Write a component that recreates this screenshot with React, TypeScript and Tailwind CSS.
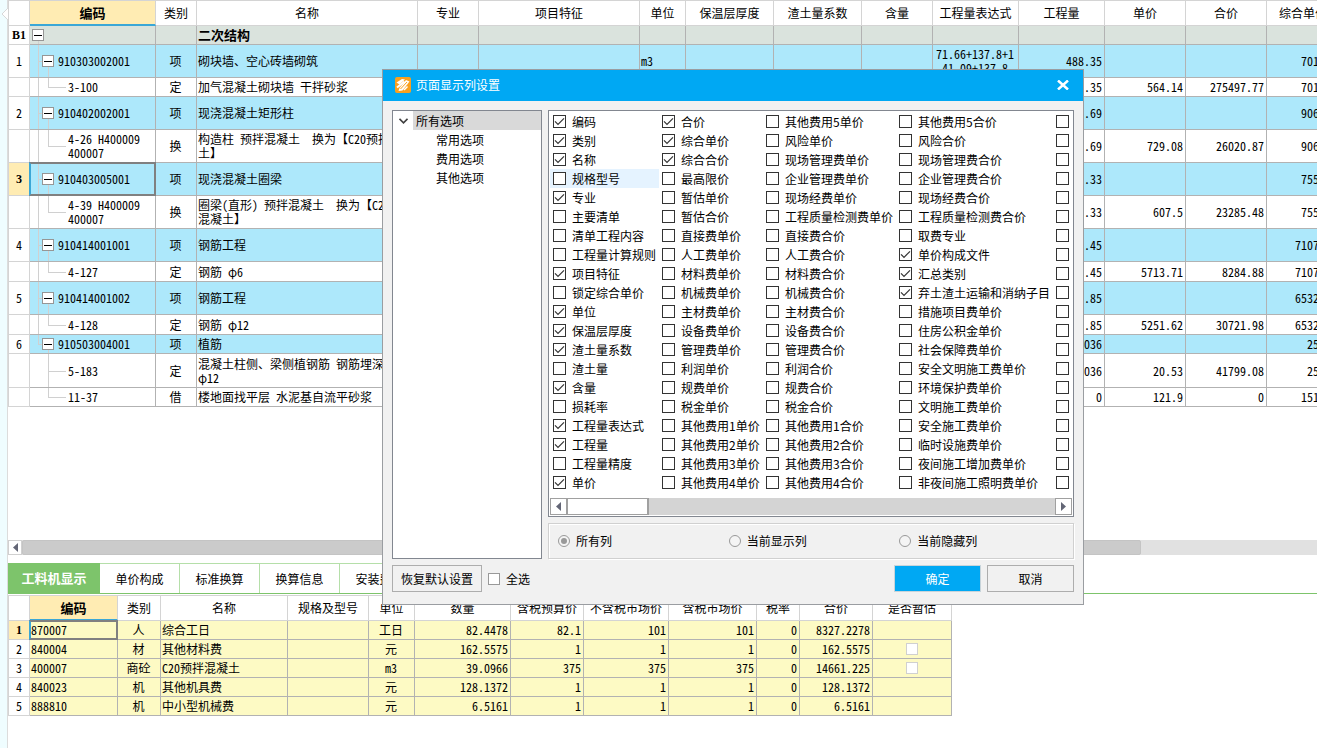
import { useState } from "react";
import type { ReactNode } from "react";
import clsx from "clsx";

type RowKind = "section" | "item" | "sub";

interface BillRow {
  no?: string;
  kind: RowKind;
  height: string;
  code?: string;
  type?: string;
  name: string;
  unit?: string;
  expr?: string;
  qty?: string;
  price?: string;
  total?: string;
  composite?: string;
  // last branch of the outer / inner tree line
  outerEnd?: boolean;
  noOuter?: boolean;
  innerEnd?: boolean;
}

const billColumns = [
  { title: "", width: "w-[22px]" },
  { title: "编码", width: "w-[126px]" },
  { title: "类别", width: "w-[41px]" },
  { title: "名称", width: "w-[221px]" },
  { title: "专业", width: "w-[61px]" },
  { title: "项目特征", width: "w-[161px]" },
  { title: "单位", width: "w-[46px]" },
  { title: "保温层厚度", width: "w-[88px]" },
  { title: "渣土量系数", width: "w-[88px]" },
  { title: "含量", width: "w-[71px]" },
  { title: "工程量表达式", width: "w-[86px]" },
  { title: "工程量", width: "w-[86px]" },
  { title: "单价", width: "w-[81px]" },
  { title: "合价", width: "w-[81px]" },
  { title: "综合单价", width: "w-[73px]" },
];

const billRows: BillRow[] = [
  { no: "B1", kind: "section", height: "h-[19px]", name: "二次结构" },
  { no: "1", kind: "item", height: "h-[33px]", code: "910303002001", type: "项", name: "砌块墙、空心砖墙砌筑", unit: "m3", expr: "71.66+137.8+1\n41.09+137.8", qty: "488.35", composite: "701.62" },
  { kind: "sub", height: "h-[19px]", code: "3-100", type: "定", name: "加气混凝土砌块墙 干拌砂浆", qty: "488.35", price: "564.14", total: "275497.77", composite: "701.62", innerEnd: true },
  { no: "2", kind: "item", height: "h-[33px]", code: "910402002001", type: "项", name: "现浇混凝土矩形柱", qty: "35.69", composite: "906.75" },
  { kind: "sub", height: "h-[33px]", code: "4-26 H400009\n400007", type: "换", name: "构造柱 预拌混凝土　换为【C20预拌混凝\n土】", qty: "35.69", price: "729.08", total: "26020.87", composite: "906.75", innerEnd: true },
  { no: "3", kind: "item", height: "h-[33px]", code: "910403005001", type: "项", name: "现浇混凝土圈梁", qty: "38.33", composite: "755.54" },
  { kind: "sub", height: "h-[33px]", code: "4-39 H400009\n400007", type: "换", name: "圈梁(直形) 预拌混凝土　换为【C20预拌\n混凝土】", qty: "38.33", price: "607.5", total: "23285.48", composite: "755.54", innerEnd: true },
  { no: "4", kind: "item", height: "h-[33px]", code: "910414001001", type: "项", name: "钢筋工程", qty: "1.45", composite: "7107.11" },
  { kind: "sub", height: "h-[20px]", code: "4-127", type: "定", name: "钢筋 φ6", qty: "1.45", price: "5713.71", total: "8284.88", composite: "7107.11", innerEnd: true },
  { no: "5", kind: "item", height: "h-[33px]", code: "910414001002", type: "项", name: "钢筋工程", qty: "5.85", composite: "6532.23" },
  { kind: "sub", height: "h-[20px]", code: "4-128", type: "定", name: "钢筋 φ12", qty: "5.85", price: "5251.62", total: "30721.98", composite: "6532.23", innerEnd: true },
  { no: "6", kind: "item", height: "h-[19px]", code: "910503004001", type: "项", name: "植筋", qty: "2036", composite: "25.53", outerEnd: true },
  { kind: "sub", height: "h-[34px]", code: "5-183", type: "定", name: "混凝土柱侧、梁侧植钢筋 钢筋埋深\nφ12", qty: "2036", price: "20.53", total: "41799.08", composite: "25.53", noOuter: true },
  { kind: "sub", height: "h-[19px]", code: "11-37", type: "借", name: "楼地面找平层 水泥基自流平砂浆", qty: "0", price: "121.9", total: "0", composite: "151.61", noOuter: true, innerEnd: true },
];

const resourceColumns = [
  { title: "", width: "w-[22px]" },
  { title: "编码", width: "w-[88px]" },
  { title: "类别", width: "w-[43px]" },
  { title: "名称", width: "w-[127px]" },
  { title: "规格及型号", width: "w-[81px]" },
  { title: "单位", width: "w-[46px]" },
  { title: "数量", width: "w-[96px]" },
  { title: "含税预算价", width: "w-[73px]" },
  { title: "不含税市场价", width: "w-[85px]" },
  { title: "含税市场价", width: "w-[88px]" },
  { title: "税率", width: "w-[43px]" },
  { title: "合价", width: "w-[73px]" },
  { title: "是否暂估", width: "w-[79px]" },
];

const resourceRows = [
  { code: "870007", type: "人", name: "综合工日", unit: "工日", qty: "82.4478", budget: "82.1", net: "101", gross: "101", total: "8327.2278", estimate: false },
  { code: "840004", type: "材", name: "其他材料费", unit: "元", qty: "162.5575", budget: "1", net: "1", gross: "1", total: "162.5575", estimate: true },
  { code: "400007", type: "商砼", name: "C20预拌混凝土", unit: "m3", qty: "39.0966", budget: "375", net: "375", gross: "375", total: "14661.225", estimate: true },
  { code: "840023", type: "机", name: "其他机具费", unit: "元", qty: "128.1372", budget: "1", net: "1", gross: "1", total: "128.1372", estimate: false },
  { code: "888810", type: "机", name: "中小型机械费", unit: "元", qty: "6.5161", budget: "1", net: "1", gross: "1", total: "6.5161", estimate: false },
];

const tabs = ["工料机显示", "单价构成", "标准换算", "换算信息", "安装费用"];

const optionColumns = [
  ["编码", "类别", "名称", "规格型号", "专业", "主要清单", "清单工程内容", "工程量计算规则", "项目特征", "锁定综合单价", "单位", "保温层厚度", "渣土量系数", "渣土量", "含量", "损耗率", "工程量表达式", "工程量", "工程量精度", "单价"],
  ["合价", "综合单价", "综合合价", "最高限价", "暂估单价", "暂估合价", "直接费单价", "人工费单价", "材料费单价", "机械费单价", "主材费单价", "设备费单价", "管理费单价", "利润单价", "规费单价", "税金单价", "其他费用1单价", "其他费用2单价", "其他费用3单价", "其他费用4单价"],
  ["其他费用5单价", "风险单价", "现场管理费单价", "企业管理费单价", "现场经费单价", "工程质量检测费单价", "直接费合价", "人工费合价", "材料费合价", "机械费合价", "主材费合价", "设备费合价", "管理费合价", "利润合价", "规费合价", "税金合价", "其他费用1合价", "其他费用2合价", "其他费用3合价", "其他费用4合价"],
  ["其他费用5合价", "风险合价", "现场管理费合价", "企业管理费合价", "现场经费合价", "工程质量检测费合价", "取费专业", "单价构成文件", "汇总类别", "弃土渣土运输和消纳子目", "措施项目费单价", "住房公积金单价", "社会保障费单价", "安全文明施工费单价", "环境保护费单价", "文明施工费单价", "安全施工费单价", "临时设施费单价", "夜间施工增加费单价", "非夜间施工照明费单价"],
];

const initialChecked = [
  "编码", "类别", "名称", "专业", "项目特征", "单位", "保温层厚度", "渣土量系数", "含量", "工程量表达式", "工程量", "单价",
  "合价", "综合单价", "综合合价", "单价构成文件", "汇总类别", "弃土渣土运输和消纳子目",
];

function HeaderRow({ columns }: { columns: { title: string; width: string }[] }) {
  return (
    <thead>
      <tr className="h-[26px]">
        {columns.map((c, i) => (
          <th
            key={i}
            scope="col"
            className={clsx(
              "border-t border-r border-[#d4d4d4] p-0 whitespace-nowrap",
              c.width,
              i === 0 && "border-l",
              i === 1 ? "border-b-2 border-b-[#3ba7d6] bg-[#ffecb3] text-[13px] font-bold" : "border-b font-normal"
            )}
          >
            {c.title}
          </th>
        ))}
      </tr>
    </thead>
  );
}

function RowNumber({ active, bold, children }: { active?: boolean; bold?: boolean; children?: ReactNode }) {
  return (
    <td
      className={clsx(
        "border-x border-b border-[#d4d4d4] p-0 text-center",
        active ? "bg-[#ffecb3]" : "bg-white",
        (active || bold) && "font-['Liberation_Serif',serif] font-bold"
      )}
    >
      {children}
    </td>
  );
}

function Cell({ align = "left", children, className }: { align?: "left" | "center" | "right"; children?: ReactNode; className?: string }) {
  return (
    <td
      className={clsx(
        "overflow-hidden border-r border-b border-[#b2b2b2] py-0 pr-[2px] pl-px whitespace-pre",
        align === "center" && "text-center",
        align === "right" && "text-right",
        className
      )}
    >
      {children}
    </td>
  );
}

function SelectionFrame() {
  return <span className="pointer-events-none absolute -inset-px border-2 border-[#808080] border-l-[#3ba7d6]" />;
}

function Expander() {
  return (
    <button type="button" aria-label="折叠" className="relative grid size-3 shrink-0 place-items-center border border-[#969696] bg-white">
      <span className="h-px w-2 bg-black" />
    </button>
  );
}

function CodeCell({ row, selected }: { row: BillRow; selected: boolean }) {
  const line = "absolute border-[#d0d0d0]";
  if (row.kind === "section") {
    return (
      <td className="relative border-r border-b border-[#b2b2b2] py-0 pr-0 pl-[2px]">
        <span className={clsx(line, "top-1/2 bottom-0 left-2 border-l")} />
        <Expander />
      </td>
    );
  }
  return (
    <td className={clsx("relative border-r border-b border-[#b2b2b2] py-0 pr-0", row.kind === "item" ? "pl-3" : "pl-[38px]")}>
      {!row.noOuter && <span className={clsx(line, "top-0 left-2 border-l", row.outerEnd ? "bottom-1/2" : "bottom-0")} />}
      {row.kind === "item" ? (
        <>
          <span className={clsx(line, "top-1/2 left-2 w-1 border-t")} />
          <span className={clsx(line, "top-1/2 bottom-0 left-[18px] border-l")} />
          <div className="flex items-center gap-1">
            <Expander />
            {row.code}
          </div>
        </>
      ) : (
        <>
          <span className={clsx(line, "top-0 left-[18px] border-l", row.innerEnd ? "bottom-1/2" : "bottom-0")} />
          <span className={clsx(line, "top-1/2 left-[18px] w-[18px] border-t")} />
          <div className="whitespace-pre">{row.code}</div>
        </>
      )}
      {selected && <SelectionFrame />}
    </td>
  );
}

function BillTable() {
  return (
    <table className="w-[1332px] table-fixed border-separate border-spacing-0">
      <HeaderRow columns={billColumns} />
      <tbody>
        {billRows.map((row, i) => (
          <tr
            key={i}
            className={clsx(
              row.height,
              row.kind === "section" && "bg-[#dae3dd] font-bold",
              row.kind === "item" && "bg-[#ade8fb]",
              row.kind === "sub" && "bg-white"
            )}
          >
            <RowNumber active={row.no === "3"} bold={row.kind === "section"}>
              {row.no}
            </RowNumber>
            <CodeCell row={row} selected={row.no === "3"} />
            <Cell align="center">{row.type}</Cell>
            <Cell className={clsx(row.kind === "section" && "text-[13px]")}>{row.name}</Cell>
            <Cell />
            <Cell />
            <Cell>{row.unit}</Cell>
            <Cell />
            <Cell />
            <Cell />
            <Cell align="center">{row.expr}</Cell>
            <Cell align="right">{row.qty}</Cell>
            <Cell align="right">{row.price}</Cell>
            <Cell align="right">{row.total}</Cell>
            <Cell align="right">{row.composite}</Cell>
          </tr>
        ))}
      </tbody>
    </table>
  );
}

function ResourceTable() {
  return (
    <table className="w-[944px] table-fixed border-separate border-spacing-0">
      <HeaderRow columns={resourceColumns} />
      <tbody>
        {resourceRows.map((row, i) => (
          <tr key={row.code} className="h-[19px] bg-[#fdfac4]">
            <RowNumber active={i === 0}>{i + 1}</RowNumber>
            <td className="relative border-r border-b border-[#b2b2b2] px-px py-0">
              {row.code}
              {i === 0 && <SelectionFrame />}
            </td>
            <Cell align="center">{row.type}</Cell>
            <Cell>{row.name}</Cell>
            <Cell />
            <Cell align="center">{row.unit}</Cell>
            <Cell align="right">{row.qty}</Cell>
            <Cell align="right">{row.budget}</Cell>
            <Cell align="right">{row.net}</Cell>
            <Cell align="right">{row.gross}</Cell>
            <Cell align="right">0</Cell>
            <Cell align="right">{row.total}</Cell>
            <Cell align="center">
              {row.estimate && (
                <input type="checkbox" aria-label="是否暂估" className="mx-auto block size-3 appearance-none border border-[#d0d0d0] bg-white" />
              )}
            </Cell>
          </tr>
        ))}
      </tbody>
    </table>
  );
}

function Arrow({ dir }: { dir: "left" | "right" }) {
  return (
    <svg width="5" height="9" viewBox="0 0 5 9" fill="#636676" aria-hidden="true">
      {dir === "left" ? <path d="M5 0v9L0 4.5z" /> : <path d="M0 0v9l5-4.5z" />}
    </svg>
  );
}

function Option({ label, checked, hidden, onChange }: { label: string; checked: boolean; hidden?: boolean; onChange: () => void }) {
  return (
    <label className={clsx("flex items-center gap-[6px] overflow-hidden pl-[3px] whitespace-nowrap", label === "规格型号" && "bg-[#e5f3ff]")}>
      <span className="grid shrink-0 place-items-center">
        <input
          type="checkbox"
          checked={checked}
          onChange={onChange}
          aria-label={label}
          className="col-start-1 row-start-1 size-[13px] appearance-none border border-[#333] bg-white"
        />
        {checked && (
          <svg width="11" height="9" viewBox="0 0 11 9" fill="none" stroke="#333" strokeWidth="1.2" className="pointer-events-none col-start-1 row-start-1">
            <path d="M1 4.3 4 7.3 10 1.3" />
          </svg>
        )}
      </span>
      {!hidden && label}
    </label>
  );
}

function ColumnDialog() {
  const [checked, setChecked] = useState(new Set(initialChecked));
  const [range, setRange] = useState("所有列");

  function toggle(name: string) {
    const next = new Set(checked);
    if (next.has(name)) next.delete(name);
    else next.add(name);
    setChecked(next);
  }

  return (
    <div role="dialog" aria-label="页面显示列设置" className="absolute top-[69px] left-[382px] w-[702px] border border-[#9a9da1] bg-[#f1f1f1] font-['Noto_Sans_CJK_SC',sans-serif]">
      <div className="flex h-[31px] items-center bg-[#00a8f3] pr-[14px] pb-px pl-3 text-white">
        <svg width="16" height="16" viewBox="0 0 16 16" aria-hidden="true">
          <rect width="16" height="16" rx="2" fill="#f9a01f" />
          <path d="M1.5 5.5 7 2l3 .5L4.500 7.500 3 6.500z" fill="#fff" />
          <path d="M11 3l3.500 1.500-7 9L3.500 14l1-3z" fill="#fff" />
          <path d="M2 10.500 9.500 4.500" stroke="#fff" strokeWidth="2" />
          <path d="M12.500 9.500 9 13" stroke="#fff" strokeWidth="1.500" />
          <path d="m5.500 12 6.500-7" stroke="#f9a01f" />
        </svg>
        <h2 className="ml-[5px] flex-1">页面显示列设置</h2>
        <button type="button" aria-label="关闭">
          <svg width="12" height="10" viewBox="0 0 12 10" fill="none" stroke="#fff" strokeWidth="2.5">
            <path d="m1 .5 10 9M11 .5l-10 9" />
          </svg>
        </button>
      </div>

      <div className="px-[9px] pt-[9px] pb-3">
        <div className="flex gap-[6px]">
          <ul className="w-[150px] shrink-0 border border-[#828790] bg-white leading-[19px]">
            <li className="flex items-center">
              <button type="button" aria-label="折叠" className="grid w-5 place-items-center">
                <svg width="9" height="6" viewBox="0 0 9 6" fill="none" stroke="#404040" strokeWidth="1.6">
                  <path d="m.5.8 4 4 4-4" />
                </svg>
              </button>
              <span className="flex-1 bg-[#d9d9d9] pl-[3px]">所有选项</span>
            </li>
            {["常用选项", "费用选项", "其他选项"].map((t) => (
              <li key={t} className="pl-[43px]">
                {t}
              </li>
            ))}
          </ul>

          <div className="flex min-w-0 flex-1 flex-col gap-[6px]">
            <div className="border border-[#828790] bg-white p-px">
              <div className="grid grid-flow-col grid-cols-[109px_104px_133px_157px_1fr] grid-rows-[repeat(20,19px)]">
                {optionColumns.map((col) =>
                  col.map((name) => <Option key={name} label={name} checked={checked.has(name)} onChange={() => toggle(name)} />)
                )}
                {Array.from({ length: 20 }, (_, i) => {
                  const name = `更多列${i + 1}`;
                  return <Option key={name} label={name} hidden checked={checked.has(name)} onChange={() => toggle(name)} />;
                })}
              </div>
              <div className="mt-[6px] flex h-[17px] bg-[#d4d4d4]">
                <button type="button" aria-label="向左" className="grid w-[17px] place-items-center border border-[#a0a0a0] bg-white">
                  <Arrow dir="left" />
                </button>
                <div className="w-[82px] border border-r-2 border-[#a0a0a0] bg-white" />
                <button type="button" aria-label="向右" className="ml-auto grid w-[17px] place-items-center border border-[#a0a0a0] bg-white">
                  <Arrow dir="right" />
                </button>
              </div>
            </div>

            <div className="grid h-9 grid-cols-3 items-center border border-[#d0d0d0] pr-[3px] pl-[9px] shadow-[inset_1px_1px_0_#fff,1px_1px_0_#fff]">
              {["所有列", "当前显示列", "当前隐藏列"].map((t) => (
                <label key={t} className="flex items-center gap-[6px]">
                  <span className="grid place-items-center">
                    <input
                      type="radio"
                      name="range"
                      checked={range === t}
                      onChange={() => setRange(t)}
                      className="col-start-1 row-start-1 size-3 appearance-none rounded-full border border-[#999] bg-[#f4f4f4]"
                    />
                    {range === t && <span className="pointer-events-none col-start-1 row-start-1 size-[6px] rounded-full bg-[#999]" />}
                  </span>
                  {t}
                </label>
              ))}
            </div>
          </div>
        </div>

        <div className="mt-[6px] flex h-[27px] items-stretch gap-[6px]">
          <button type="button" className="w-[90px] border border-[#adadad] bg-[#f1f1f1]">
            恢复默认设置
          </button>
          <label className="flex items-center gap-[6px]">
            <input type="checkbox" className="size-3 appearance-none border border-[#999] bg-white" />
            全选
          </label>
          <button type="button" className="ml-auto w-[87px] border border-[#c8d4da] bg-[#00a8f3] text-white">
            确定
          </button>
          <button type="button" className="w-[87px] border border-[#adadad] bg-[#f1f1f1]">
            取消
          </button>
        </div>
      </div>
    </div>
  );
}

export default function App() {
  const [tab, setTab] = useState(tabs[0]);

  return (
    <div className="relative flex h-screen overflow-hidden bg-white font-['Noto_Sans_Mono_CJK_SC','Noto_Sans_CJK_SC',sans-serif] text-[12px] leading-[14px] text-black">
      <aside className="w-2 shrink-0 border-r border-[#dcdcdc] bg-[#effdff] pt-2">
        <svg width="8" height="12" viewBox="0 0 8 12" fill="#fff" stroke="#d8d8d8" aria-hidden="true">
          <path d="M8 0 2 6l6 6" />
        </svg>
      </aside>

      <main className="flex min-w-0 flex-1 flex-col">
        <section className="min-h-0 flex-1 overflow-hidden">
          <BillTable />
        </section>

        <div className="flex h-[15px] shrink-0 bg-[#e1e1e1]">
          <button type="button" aria-label="向左滚动" className="grid w-[14px] place-items-center border border-[#d0d0d0] bg-white">
            <Arrow dir="left" />
          </button>
          <div className="flex-[19] rounded-xs border border-[#c4c4c4] bg-[#cbcbcb]" />
          <div className="flex-[3]" />
        </div>

        <nav className="mt-2 flex h-[31px] shrink-0 border-b border-[#7dc46b]">
          {tabs.map((t) => (
            <button
              key={t}
              type="button"
              onClick={() => setTab(t)}
              className={clsx(
                t === tab
                  ? "w-[92px] bg-[#7dc46b] text-[13px] font-bold text-white"
                  : "w-20 border-t border-r border-[#b5dfa9] bg-white"
              )}
            >
              {t}
            </button>
          ))}
        </nav>

        <section className="h-[154px] shrink-0 overflow-hidden pt-px">
          <ResourceTable />
        </section>
      </main>

      <ColumnDialog />
    </div>
  );
}
